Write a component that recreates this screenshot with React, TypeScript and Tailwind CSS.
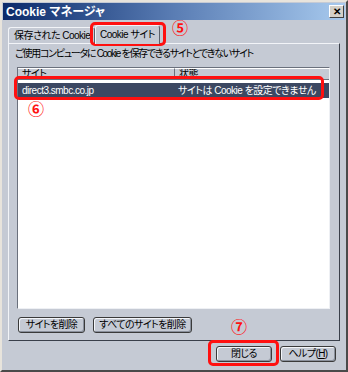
import React from "react";

function Win9xButton({ label, width }: { label: React.ReactNode; width: string }) {
  return (
    <button
      className={`${width} h-[16px] rounded-[3px] border border-[#3a3a3a] bg-[#c5cad4] shadow-[inset_1px_1px_0_#f4f6fa,inset_-1px_-1px_0_#8a909c] flex items-center justify-center text-[10px] tracking-[-0.6px] leading-none text-black whitespace-nowrap`}
    >
      {label}
    </button>
  );
}

export default function App() {
  return (
    <div
      className="relative w-[348px] h-[372px] overflow-hidden bg-[#c5cad4] border-l-2 border-t-2 border-r-2 border-b-2 border-l-[#e8e4dc] border-t-[#e8e4dc] border-r-[#4a4a4a] border-b-[#4a4a4a] text-black [font-feature-settings:'palt']"
      style={{ fontFamily: '"Liberation Sans", "Noto Sans CJK JP", sans-serif' }}
    >
      {/* title bar */}
      <div className="mx-[1px] mt-[1px] h-[17px] flex items-center justify-between bg-gradient-to-r from-[#0c2a6a] via-[#5a7db4] to-[#a8caee] pl-[3px] pr-[1px]">
        <span className="text-white font-bold text-[12px] leading-none">Cookie マネージャ</span>
        <div className="w-[15px] h-[13px] bg-[#d4d0c8] border border-t-white border-l-white border-r-[#404040] border-b-[#404040] flex items-center justify-center text-[10px] font-bold leading-none">
          ✕
        </div>
      </div>

      {/* tabs */}
      <div className="mt-[4px] ml-[6px] flex items-end h-[19px] text-[10px] tracking-[-0.5px]">
        <div className="h-[16px] w-[87px] rounded-t-[3px] border border-b-0 border-[#f2f4f8] border-r-[#5a5f6a] bg-[#c5cad4] flex items-center pl-[5px] leading-none whitespace-nowrap">
          保存された Cookie
        </div>
        <div className="h-[19px] w-[65px] rounded-t-[3px] border border-b-0 border-[#f2f4f8] border-r-[#5a5f6a] bg-[#c5cad4] flex items-center pl-[4px] leading-none whitespace-nowrap relative z-10 -mb-[1px]">
          Cookie サイト
        </div>
      </div>

      {/* panel */}
      <div className="ml-[6px] w-[332px] h-[298px] border border-t-[#f2f4f8] border-l-[#f2f4f8] border-r-[#3a3f4a] border-b-[#3a3f4a] flex flex-col text-[10px] tracking-[-0.5px]">
        <div className="pl-[6px] pt-[4px] leading-[12px] whitespace-nowrap tracking-[-1.3px]">
          ご使用コンピュータに Cookie を保存できるサイトとできないサイト
        </div>

        <div className="ml-[8px] mt-[7px] w-[313px] h-[242px] border border-t-[#6a707c] border-l-[#6a707c] border-r-[#eef0f4] border-b-[#eef0f4] bg-white flex flex-col">
          <div className="flex h-[12px] bg-[#c5cad4] leading-none">
            <div className="w-[157px] border-r border-b border-[#6a707c] border-t border-t-white pl-[4px] overflow-hidden flex items-end">
              サイト
            </div>
            <div className="flex-1 border-b border-[#6a707c] border-t border-t-white pl-[4px] overflow-hidden flex items-end">
              状態
            </div>
          </div>
          <div className="mt-[3px] h-[15px] bg-[#3c4862] text-white leading-none flex items-center">
            <div className="w-[160px] pl-[4px]">direct3.smbc.co.jp</div>
            <div className="flex-1 whitespace-nowrap">サイトは Cookie を設定できません</div>
          </div>
        </div>

        <div className="ml-[9px] mt-[8px] flex gap-[8px]">
          <Win9xButton label="サイトを削除" width="w-[67px]" />
          <Win9xButton label="すべてのサイトを削除" width="w-[99px]" />
        </div>
      </div>

      {/* bottom buttons */}
      <div className="mt-[5px] mr-[10px] flex justify-end gap-[8px]">
        <Win9xButton label="閉じる" width="w-[56px]" />
        <Win9xButton
          label={
            <span>
              ヘルプ(<span className="underline">H</span>)
            </span>
          }
          width="w-[56px]"
        />
      </div>

      {/* annotations */}
      <div className="absolute left-[88px] top-[20px] w-[76px] h-[24px] rounded-[5px] border-[3px] border-[#ff1010]" />
      <div className="absolute left-[170px] top-[19px] text-[#ff1010] font-bold text-[16px] leading-none">⑤</div>

      <div className="absolute left-[12px] top-[74px] w-[310px] h-[24px] rounded-[5px] border-[3px] border-[#ff1010]" />
      <div className="absolute left-[26px] top-[100px] text-[#ff1010] font-bold text-[16px] leading-none">⑥</div>

      <div className="absolute left-[229px] top-[318px] text-[#ff1010] font-bold text-[16px] leading-none">⑦</div>
      <div className="absolute left-[206px] top-[338px] w-[71px] h-[26px] rounded-[5px] border-[3px] border-[#ff1010]" />
    </div>
  );
}
